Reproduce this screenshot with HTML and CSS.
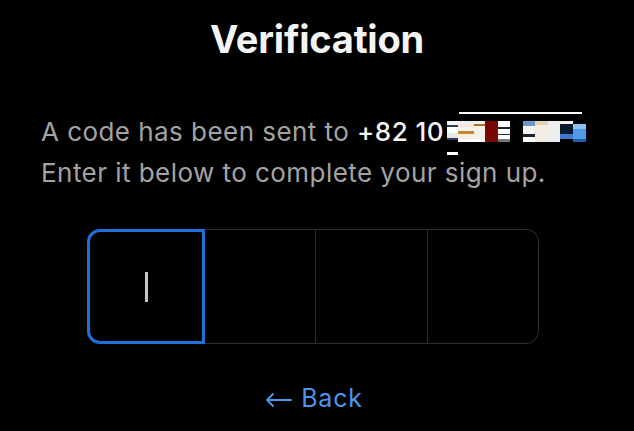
FILE: index.html
```html
<!DOCTYPE html>
<html lang="en">
<head>
<meta charset="utf-8">
<title>Verification</title>
<link rel="stylesheet" href="styles.css">
</head>
<body>
<main class="page">
  <h1 class="title">Verification</h1>
  <p class="message">A code has been sent to <strong class="phone">+82 10<span class="redact"><span class="r-line"></span><span class="r-tick"></span><span class="r-block b1"></span><span class="r-block b2"></span><span class="r-block b2b"></span><span class="r-block b3"></span><span class="r-block b4"></span><span class="r-gap"></span><span class="r-block b5"></span><span class="r-block b6"></span><span class="r-block b6b"></span><span class="r-block b7"></span><span class="r-block b8"></span></span></strong><br>Enter it below to complete your sign up.</p>
  <div class="otp">
    <div class="cell active"><span class="caret"></span></div>
    <div class="cell"></div>
    <div class="cell"></div>
    <div class="cell"></div>
  </div>
  <a class="back" href="#"><svg class="arrow" width="27" height="14" viewBox="0 0 27 14" aria-hidden="true"><path d="M26 7H2M8 1L2 7l6 6" fill="none" stroke="currentColor" stroke-width="1.8" stroke-linecap="round" stroke-linejoin="round"/></svg><span>Back</span></a>
</main>
</body>
</html>
```
FILE: styles.css
```css
html, body {
  margin: 0;
  padding: 0;
  background: #000;
}
body {
  font-family: Inter, "Noto Sans", sans-serif;
  color: #f2f2f2;
  width: 634px;
  height: 431px;
  overflow: hidden;
}
.page {
  display: flex;
  flex-direction: column;
  align-items: center;
  padding-top: 16px;
}
.title {
  margin: 0;
  font-size: 38px;
  line-height: 46px;
  font-weight: 700;
  letter-spacing: -0.2px;
  color: #f4f4f4;
}
.message {
  align-self: flex-start;
  margin: 49px 0 0 41px;
  font-size: 26px;
  line-height: 41px;
  letter-spacing: 0.45px;
  color: #a3a3a3;
  font-weight: 400;
}
.phone {
  color: #f5f5f5;
  font-weight: 500;
}
.redact {
  display: inline-flex;
  position: relative;
  height: 21px;
  vertical-align: -1px;
  margin-left: 3px;
}
.r-line {
  position: absolute;
  left: 12px;
  top: -9px;
  width: 123px;
  height: 2px;
  background: #fff;
}
.r-tick {
  position: absolute;
  left: 0;
  top: 31px;
  width: 11px;
  height: 3px;
  background: #fff;
}
.r-block { height: 21px; display: inline-block; }
.b1 { width: 11px; background: linear-gradient(#f6f6f6 0 18%, #2a3b55 18% 28%, #fff 28% 58%, #e8e8e8 58% 82%, #2a3b55 82% 90%, #000 90%); }
.b2 { width: 16px; background: linear-gradient(#e9eef5 0 15%, #f3e6d6 15% 30%, #f1f1f1 30% 48%, #c58a2a 48% 62%, #f7efe5 62% 86%, #fff 86%); }
.b2b { width: 11px; background: linear-gradient(#f0f0f0 0 15%, #b0722a 15% 25%, #f4f0ea 25% 85%, #fff 85%); }
.b3 { width: 13px; background: #790803; }
.b4 { width: 12px; background: linear-gradient(#fff 0 28%, #222 28% 36%, #fff 36% 60%, #333 60% 66%, #fff 66% 88%, #777 88%); }
.r-gap { width: 13px; }
.b5 { width: 12px; background: linear-gradient(#6a9ad0 0 22%, #f4f4f4 22% 62%, #1a2430 62% 76%, #fff 76%); }
.b6 { width: 13px; background: linear-gradient(#e4d2b8 0 20%, #f3ece2 20%); }
.b6b { width: 12px; background: #eeeeee; }
.b7 { width: 13px; background: linear-gradient(#f2f2f2 0 15%, #0b1a30 15% 62%, #3b7ad0 62% 85%, #000 85%); }
.b8 { width: 13px; background: linear-gradient(#000 0 15%, #8cc0ee 15% 40%, #4f9ae6 40% 85%, #1f5fb0 85%); }
.otp {
  display: flex;
  width: 452px;
  height: 115px;
  margin-top: 36px;
  margin-right: 8px;
  border: 1px solid #2e2e2e;
  border-radius: 13px;
  box-sizing: border-box;
}
.cell {
  flex: 1;
  display: flex;
  align-items: center;
  justify-content: center;
  border-left: 1px solid #2e2e2e;
}
.cell:first-child { border-left: none; }
.cell.active {
  flex: 0 0 118px;
  margin: -1px 0 -1px -1px;
  border: 3px solid #1f6fd6;
  border-radius: 13px 0 0 13px;
  box-sizing: border-box;
}
.cell.active + .cell { border-left: none; }
.caret {
  width: 3px;
  height: 30px;
  background: #c4c4c4;
  margin-left: 1px;
}
.back {
  display: flex;
  align-items: center;
  gap: 9px;
  margin-top: 39px;
  margin-right: 6px;
  font-size: 25px;
  line-height: 30px;
  letter-spacing: 0.8px;
  color: #4d96ee;
  text-decoration: none;
}
.arrow {
  flex: none;
  margin-top: 4px;
}
```
